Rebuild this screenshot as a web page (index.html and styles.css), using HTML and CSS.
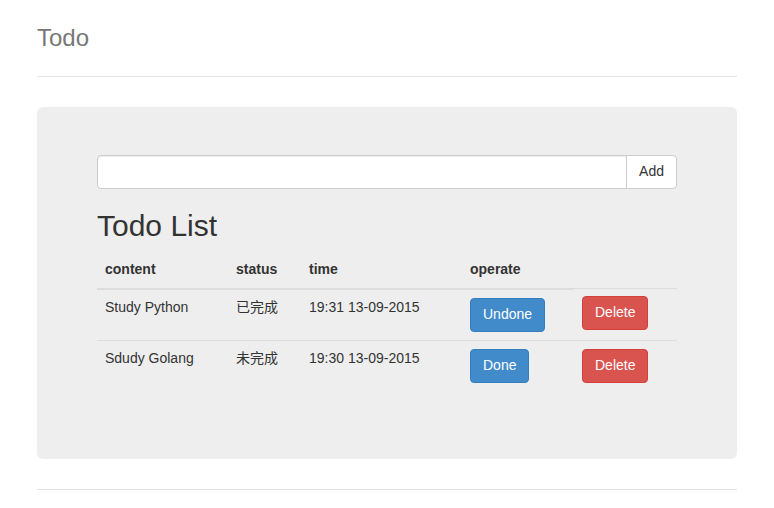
FILE: index.html
```
<!DOCTYPE html>
<html lang="en">
<head>
<meta charset="utf-8">
<title>Todo</title>
<link rel="stylesheet" href="styles.css">
</head>
<body>
<div class="container">
  <div class="header">
    <h3 class="brand">Todo</h3>
  </div>
  <div class="jumbotron">
    <form class="input-group">
      <input class="form-control" type="text">
      <button class="btn btn-default addon" type="button">Add</button>
    </form>
    <h2 class="list-title">Todo List</h2>
    <table class="table">
      <colgroup>
        <col class="c1"><col class="c2"><col class="c3"><col class="c4"><col class="c5">
      </colgroup>
      <thead>
        <tr><th>content</th><th>status</th><th>time</th><th>operate</th></tr>
      </thead>
      <tbody>
        <tr>
          <td>Study Python</td>
          <td>已完成</td>
          <td>19:31 13-09-2015</td>
          <td><button class="btn btn-primary" type="button">Undone</button></td>
          <td><button class="btn btn-danger lift" type="button">Delete</button></td>
        </tr>
        <tr>
          <td>Sdudy Golang</td>
          <td>未完成</td>
          <td>19:30 13-09-2015</td>
          <td><button class="btn btn-primary" type="button">Done</button></td>
          <td><button class="btn btn-danger" type="button">Delete</button></td>
        </tr>
      </tbody>
    </table>
  </div>
  <div class="footer"></div>
</div>
</body>
</html>
```

FILE: styles.css
```
* { box-sizing: border-box; }
html, body { margin: 0; }
body {
  padding-top: 20px;
  padding-bottom: 20px;
  font-family: "Liberation Sans", Arial, "Noto Sans CJK SC", sans-serif;
  font-size: 14px;
  line-height: 1.42857;
  color: #333;
  background: #fff;
}
.container {
  max-width: 730px;
  margin: 0 auto;
  padding: 0 15px;
}
.header {
  padding-bottom: 20px;
  border-bottom: 1px solid #e5e5e5;
  margin-bottom: 30px;
}
.brand {
  margin: 0;
  font-size: 24px;
  font-weight: 500;
  line-height: 36px;
  color: #777;
}
.jumbotron {
  background: #eee;
  border-radius: 6px;
  padding: 48px 60px;
  margin-bottom: 30px;
}
.input-group {
  display: flex;
  margin: 0;
}
.form-control {
  flex: 1;
  height: 34px;
  padding: 6px 12px;
  border: 1px solid #ccc;
  border-radius: 4px 0 0 4px;
  background: #fff;
  font: inherit;
  box-shadow: inset 0 1px 1px rgba(0,0,0,.075);
  outline: none;
}
.btn {
  display: inline-block;
  padding: 6px 12px;
  font-family: inherit;
  font-size: 14px;
  line-height: 1.42857;
  border: 1px solid transparent;
  border-radius: 4px;
  cursor: pointer;
  white-space: nowrap;
  margin: 0;
  vertical-align: top;
}
.btn-default {
  color: #333;
  background: #fff;
  border-color: #ccc;
}
.addon {
  margin-left: -1px;
  border-radius: 0 4px 4px 0;
  height: 34px;
}
.btn-primary {
  color: #fff;
  background: #428bca;
  border-color: #357ebd;
}
.btn-danger {
  color: #fff;
  background: #d9534f;
  border-color: #d43f3a;
}
.lift { margin-top: -1px; }
.list-title {
  margin: 20px 0 10px;
  font-size: 30px;
  font-weight: 500;
  line-height: 1.1;
  color: #333;
}
.table {
  width: 100%;
  border-collapse: collapse;
  border-spacing: 0;
  table-layout: fixed;
  margin-bottom: 20px;
}
.c1 { width: 131px; }
.c2 { width: 73px; }
.c3 { width: 161px; }
.c4 { width: 112px; }
.c5 { width: 103px; }
.table th,
.table td {
  padding: 8px;
  text-align: left;
  vertical-align: top;
  line-height: 1.42857;
}
.table th {
  font-weight: bold;
  border-bottom: 2px solid #ddd;
  vertical-align: bottom;
}
.table td {
  border-top: 1px solid #ddd;
}
.footer {
  border-top: 1px solid #e5e5e5;
  padding-top: 19px;
}
```
